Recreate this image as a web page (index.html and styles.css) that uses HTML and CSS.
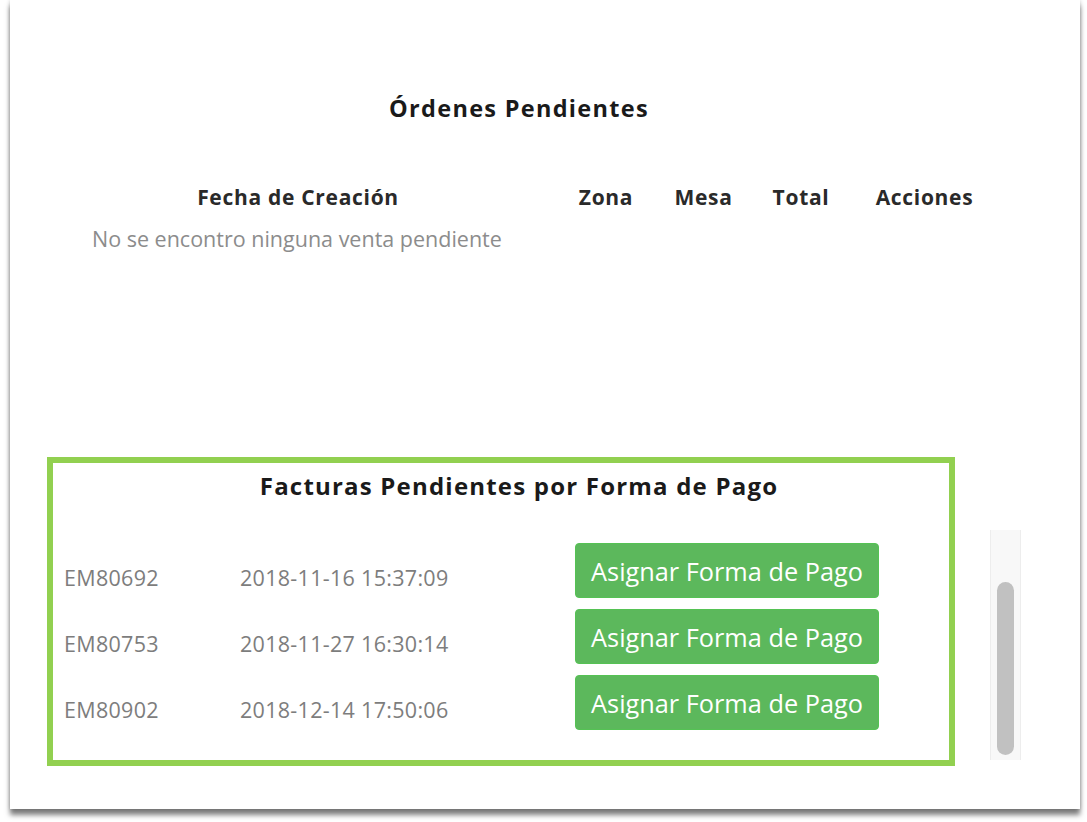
FILE: index.html
```html
<!DOCTYPE html>
<html>
	<head>
		<meta name="viewport" content="width=device-width, initial-scale=1" />
		<link rel="stylesheet" href="styles.css">
	</head>

	<body>
		<div class="page">
			<div class="card">
				<div class="content">
					<h2 class="title">Órdenes Pendientes</h2>
					<div class="orders">
						<div class="orders-head">
							<span>Fecha de Creación</span>
							<span>Zona</span>
							<span>Mesa</span>
							<span>Total</span>
							<span>Acciones</span>
						</div>
						<div class="orders-empty">No se encontro ninguna venta pendiente</div>
					</div>

					<div class="bottom">
						<div class="invoices">
							<h3 class="invoices-title">Facturas Pendientes por Forma de Pago</h3>
							<div class="invoice-row">
								<span class="code">EM80692</span>
								<span class="date">2018-11-16 15:37:09</span>
								<button>Asignar Forma de Pago</button>
							</div>
							<div class="invoice-row">
								<span class="code">EM80753</span>
								<span class="date">2018-11-27 16:30:14</span>
								<button>Asignar Forma de Pago</button>
							</div>
							<div class="invoice-row">
								<span class="code">EM80902</span>
								<span class="date">2018-12-14 17:50:06</span>
								<button>Asignar Forma de Pago</button>
							</div>
						</div>
						<div class="scrollbar"><div class="thumb"></div></div>
					</div>
				</div>
			</div>
		</div>
	</body>
</html>
```

FILE: styles.css
```css
html, body {
    margin: 0;
    background-color: #fff;
    font-family: "Open Sans", "DejaVu Sans", sans-serif;
}

.page {
    height: 822px;
    padding-left: 10px;
    overflow: hidden;
}

.card {
    box-sizing: border-box;
    width: 1070px;
    height: 809px;
    padding: 93px 0 0 37px;
    background-color: #fff;
    box-shadow: 0px 6px 5px rgba(0, 0, 0, 0.5), 0px 0px 4px rgba(0, 0, 0, 0.2);
    clip-path: inset(0px -12px -14px -12px);
}

.content {
    width: 944px;
}

.title {
    margin: 0;
    font-size: 23.5px;
    line-height: 30px;
    font-weight: 700;
    letter-spacing: 1.3px;
    color: #1a1a1a;
    text-align: center;
}

.orders {
    margin-top: 60px;
}

.orders-head {
    display: grid;
    grid-template-columns: 502px 114px 81px 114px 133px;
    font-size: 21px;
    line-height: 28px;
    font-weight: 700;
    letter-spacing: 0.7px;
    color: #2a2a2a;
    text-align: center;
}

.orders-empty {
    margin-top: 14px;
    padding-left: 45px;
    font-size: 21.5px;
    line-height: 28px;
    color: #8c8c8c;
}

.bottom {
    display: flex;
    margin-top: 204px;
}

.invoices {
    flex-shrink: 0;
    box-sizing: border-box;
    width: 908px;
    padding: 8px 0 30px 11px;
    border: 6px solid #92d050;
}

.invoices-title {
    margin: 0 0 42px 0;
    padding-left: 25px;
    font-size: 24px;
    line-height: 30px;
    font-weight: 700;
    letter-spacing: 1.2px;
    color: #1a1a1a;
    text-align: center;
}

.invoice-row {
    display: grid;
    grid-template-columns: 176px 335px 304px;
    align-items: center;
    height: 55px;
    margin-bottom: 11px;
    font-size: 21.5px;
    letter-spacing: 0.3px;
    color: #7d7d7d;
}

.invoice-row:last-child {
    margin-bottom: 0;
}

.code, .date {
    padding-top: 14px;
}

button {
    height: 55px;
    padding: 0;
    background-color: #5cb85c;
    border: 1px solid #55c254;
    border-radius: 4px;
    color: #fff;
    font-family: "Open Sans", "DejaVu Sans", sans-serif;
    font-size: 25.3px;
}

.scrollbar {
    flex-shrink: 0;
    align-self: flex-end;
    box-sizing: border-box;
    width: 31px;
    height: 230px;
    margin: 0 0 6px 35px;
    padding-top: 52px;
    background-color: #f8f8f8;
    border-left: 1px solid #ededed;
    border-right: 1px solid #ededed;
}

.thumb {
    width: 17px;
    height: 173px;
    margin: 0 auto;
    border-radius: 9px;
    background-color: #c1c1c1;
}
```
